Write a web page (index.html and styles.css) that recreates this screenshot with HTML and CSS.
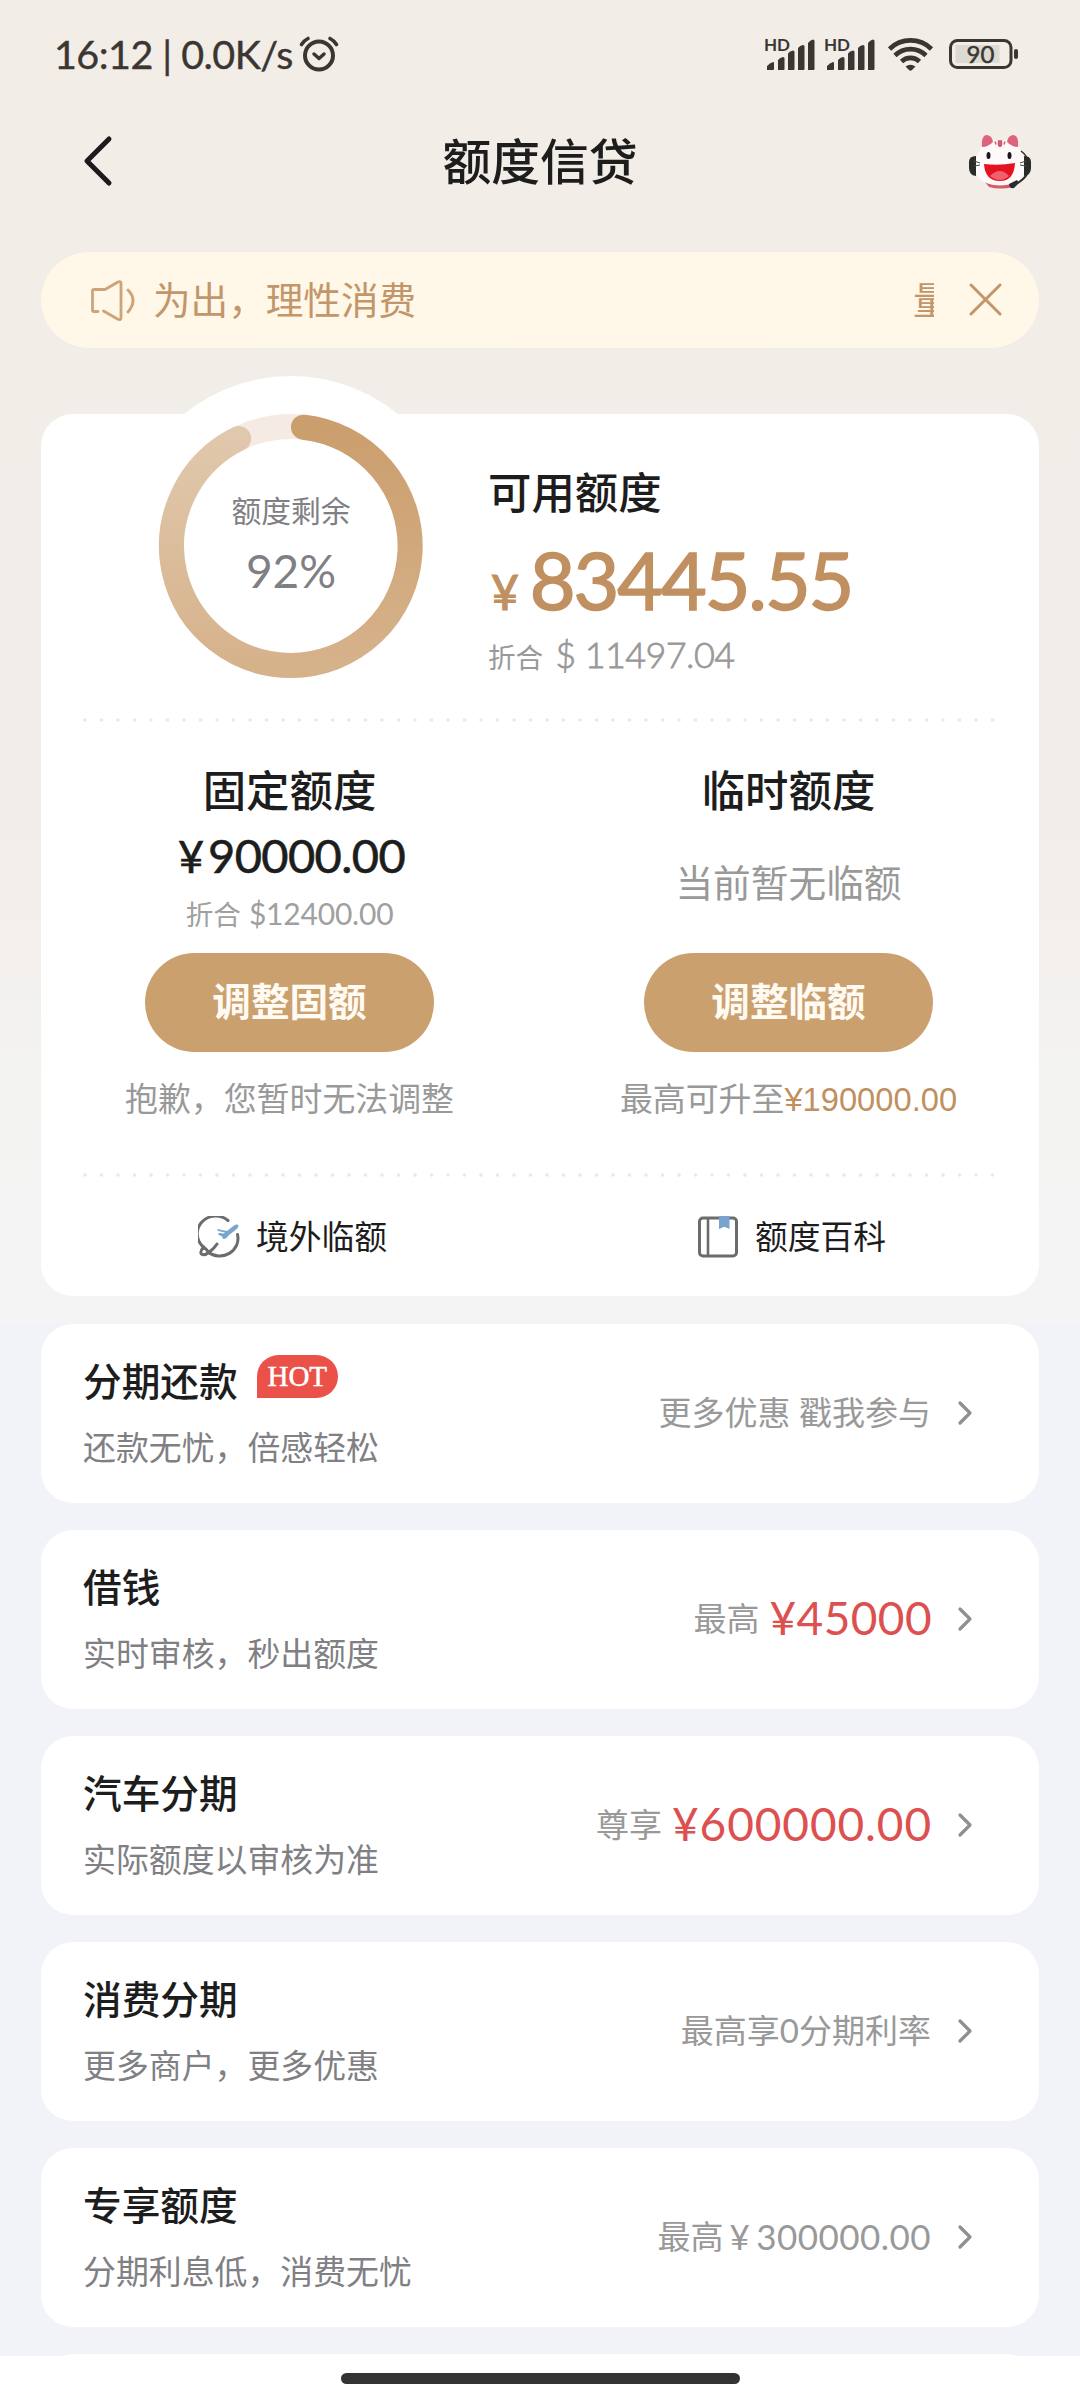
FILE: index.html
```html
<!DOCTYPE html>
<html lang="zh-CN">
<head>
<meta charset="utf-8">
<title>额度信贷</title>
<link rel="stylesheet" href="styles.css">
</head>
<body>
<div class="screen">
  <header class="status">
    <span class="clock">16:12 | 0.0K/s</span>
    <svg class="alarm" width="40" height="38" viewBox="0 0 40 38" fill="none" stroke="#3b3632" stroke-linecap="round">
      <circle cx="20" cy="20.500" r="14" stroke-width="4"/>
      <path d="M15 19l5 4.500 5-4.500" stroke-width="3.500" stroke-linejoin="round"/>
      <path d="M2.500 9.500Q5 5.500 9 3.500M37.500 9.500Q35 5.500 31 3.500" stroke-width="3.600"/>
    </svg>
    <svg class="signals" width="254" height="38" viewBox="0 0 254 38">
      <defs>
        <g id="signal" fill="#3b3632">
          <text x="0" y="15.500" class="hd">HD</text>
          <path d="M3 35v-4q3-3 6-4q1 0 1 1v6q0 1-1 1z"/>
          <path d="M14 35V25q2-2.500 5-3q1.500 0 1.500 1.500V34q0 1-1 1z"/>
          <path d="M24 35V18.500q2-2.500 5-3q1.500 0 1.500 1.500v17q0 1-1 1z"/>
          <path d="M34 35V13q2-2.500 5-3q1.500 0 1.500 1.500V34q0 1-1 1z"/>
          <path d="M44 35V8q2-3 5-3.500q1.500 0 1.500 1.500v28q0 1-1 1z"/>
        </g>
      </defs>
      <use href="#signal"/>
      <use href="#signal" x="60"/>
      <g fill="none" stroke="#3b3632" stroke-width="4.600">
        <path d="M125.500 14a30 30 0 0 1 42 0"/>
        <path d="M131 20.500a22 22 0 0 1 31 0"/>
        <path d="M137.500 26.500a13 13 0 0 1 18 0"/>
      </g>
      <path d="M141.500 31.500q5-3.500 10 0L148 35q-1.500 1.500-3 0z" fill="#3b3632"/>
      <rect x="191.500" y="10" width="44" height="18" fill="#dcdad3"/>
      <rect x="186.500" y="5.500" width="60.500" height="27" rx="7" fill="none" stroke="#3b3632" stroke-width="3"/>
      <rect x="250" y="14" width="4" height="10" rx="2" fill="#3b3632"/>
      <text x="216.500" y="27.500" class="charge">90</text>
    </svg>
  </header>

  <nav class="bar">
    <svg class="back" width="30" height="52" viewBox="0 0 30 52" fill="none" stroke="#1b1b1b" stroke-width="5" stroke-linecap="round" stroke-linejoin="round"><path d="M26 4L4 26l22 22"/></svg>
    <h1>额度信贷</h1>
    <svg class="mascot" width="64" height="58" viewBox="0 0 64 58">
      <path d="M17 50q14 7 31 0l-3 5q-12 3-24 0z" fill="#d9596c"/>
      <path d="M32 8c10 0 17 3 20 10 4 7 6 13 5 20-2 11-13 15-25 15S9 49 7 38c-1-7 1-13 5-20C15 11 22 8 32 8z" fill="#fffafa"/>
      <path d="M14 15Q13 3 19 3q5 .500 6 7-5 5-11 5zM50 15Q51 3 45 3q-5 .500-6 7 5 5 11 5z" fill="#dd647c"/>
      <path d="M30.500 9h3v4q-1.500 3-3 0zM27 9.500l1 3M37 9.500l-1 3" fill="#cf5b6c" stroke="#cf5b6c" stroke-width="1.500"/>
      <ellipse cx="20.500" cy="23.500" rx="2" ry="3.600" fill="#18181a"/>
      <ellipse cx="41.500" cy="23.500" rx="2" ry="3.600" fill="#18181a"/>
      <path d="M16 32q15 2 31-1-1 18-15 18-15 0-16-17z" fill="#e51322"/>
      <path d="M22 44q10-10 19 0-9 8-19 0z" fill="#f0616d"/>
      <path d="M8 24q-7 0-7 6v6q0 7 7 8zM56 24q7 0 7 6v6q0 7-7 8z" fill="#2c2b2b"/>
      <path d="M6 29l6 2M6 34l6-1M58 29l-6 2M58 34l-6-1" stroke="#444" stroke-width="1"/>
      <path d="M59 42q-2 4-9 9" fill="none" stroke="#2c2b2b" stroke-width="2"/>
      <path d="M41 52l8-4 2 3-5 5q-5 1-5-4z" fill="#2c2b2b"/>
      <path d="M53 19q7 5 7 12" fill="none" stroke="#2c2b2b" stroke-width="1.500"/>
    </svg>
  </nav>

  <div class="notice">
    <svg width="46" height="44" viewBox="0 0 46 44" fill="none" stroke="#cda377" stroke-width="2.800" stroke-linecap="round" stroke-linejoin="round">
      <path d="M9 33.500H5Q3.500 33.500 3.500 32V13Q3.500 11.500 5 11.500h11L29 4q3-1 3 1.500v34q0 3-3 1.800L14.500 33"/>
      <path d="M39 12q10 10 0 22"/>
    </svg>
    <p class="ticker">为出，理性消费</p>
    <p class="ticker-next">量</p>
    <svg class="close" width="34" height="34" viewBox="0 0 34 34" fill="none" stroke="#c2956a" stroke-width="3" stroke-linecap="round"><path d="M2 2l29 29M31 2L2 31"/></svg>
  </div>

  <section class="card summary">
    <div class="hero">
      <svg class="ring" width="340" height="340" viewBox="0 0 340 340">
        <defs>
          <linearGradient id="warm" x1="0" y1="50" x2="0" y2="290" gradientUnits="userSpaceOnUse"><stop offset="0" stop-color="#cb9e6d"/><stop offset="1" stop-color="#d6b28b"/></linearGradient>
          <linearGradient id="pale" x1="0" y1="50" x2="0" y2="290" gradientUnits="userSpaceOnUse"><stop offset="0" stop-color="#e1c9ae"/><stop offset="1" stop-color="#d6b28b"/></linearGradient>
        </defs>
        <circle cx="170" cy="170" r="170" fill="#fff"/>
        <g fill="none" stroke-width="25">
          <circle cx="170" cy="170" r="119.500" stroke="#f5ebe4"/>
          <path d="M117.600 62.600A119.500 119.500 0 0 0 170 289.500" stroke="url(#pale)" stroke-linecap="round"/>
          <path d="M170 289.500A119.500 119.500 0 0 0 182.500 51.200" stroke="url(#warm)"/>
        </g>
        <circle cx="182.500" cy="51.200" r="12.500" fill="#cb9e6d"/>
        <text x="170" y="145.500" class="ring-label">额度剩余</text>
        <text x="170" y="212" class="ring-value">92%</text>
      </svg>
      <div class="available">
        <h2>可用额度</h2>
        <p class="total"><span class="yen">¥</span>83445.55</p>
        <p class="approx">折合 <span class="usd">$ 11497.04</span></p>
      </div>
    </div>
    <svg class="dots" width="916" height="4"><path d="M2 2H914" stroke="#e9e9e9" stroke-width="3.600" stroke-linecap="round" stroke-dasharray="0 16.500"/></svg>
    <div class="limits">
      <div class="limit">
        <h2>固定额度</h2>
        <p class="fixed">¥<span class="fixed-sum">90000.00</span></p>
        <p class="equiv">折合 <span class="equiv-usd">$12400.00</span></p>
        <div class="button">调整固额</div>
        <p class="note">抱歉，您暂时无法调整</p>
      </div>
      <div class="limit">
        <h2>临时额度</h2>
        <p class="none">当前暂无临额</p>
        <div class="button">调整临额</div>
        <p class="note">最高可升至<span class="raise">¥190000.00</span></p>
      </div>
    </div>
    <svg class="dots" width="916" height="4"><path d="M2 2H914" stroke="#e9e9e9" stroke-width="3.600" stroke-linecap="round" stroke-dasharray="0 16.500"/></svg>
    <div class="links">
      <div class="link">
        <svg width="42" height="42" viewBox="0 0 42 42" fill="none">
          <path d="M30 4.500A18.300 17.500 0 0 0 5.500 31M10 36A18.300 17.500 0 0 0 39.500 18.500" stroke="#6c6c6e" stroke-width="3" stroke-linecap="round"/>
          <path d="M5.500 31q-4 5-2 7 3 2 8-2 5-4 7.500-8M5.500 31q3 2 5 5" stroke="#6c6c6e" stroke-width="3" stroke-linecap="round"/>
          <path d="M19 13l10 2 7-5.500q3.500-2 4.500 0 0 2-3 4.500l-6.500 5L28 22.500l-3 .500-1-2.500-4-2q0-1.500 1.500-1.500l4.500.500 1-1-7-1.500z" fill="#79a5cd"/>
        </svg>
        <span>境外临额</span>
      </div>
      <div class="link">
        <svg width="42" height="42" viewBox="0 0 42 42" fill="none">
          <rect x="2.500" y="2" width="37" height="38" rx="3.500" stroke="#6c6c6e" stroke-width="3"/>
          <path d="M11 2v38" stroke="#6c6c6e" stroke-width="2.600"/>
          <path d="M22 0h10.500v13l-5.200-2.300L22 13z" fill="#78a3cf"/>
        </svg>
        <span>额度百科</span>
      </div>
    </div>
  </section>

  <main class="list">
    <article class="card item">
      <div class="item-text"><h3>分期还款<span class="hot">HOT</span></h3><p>还款无忧，倍感轻松</p></div>
      <p class="item-side">更多优惠 戳我参与</p>
      <svg class="chevron" width="18" height="28" viewBox="0 0 18 28"><path d="M4 4l10 10L4 24"/></svg>
    </article>
    <article class="card item">
      <div class="item-text"><h3>借钱</h3><p>实时审核，秒出额度</p></div>
      <p class="item-side">最高<span class="red short">¥45000</span></p>
      <svg class="chevron" width="18" height="28" viewBox="0 0 18 28"><path d="M4 4l10 10L4 24"/></svg>
    </article>
    <article class="card item">
      <div class="item-text"><h3>汽车分期</h3><p>实际额度以审核为准</p></div>
      <p class="item-side">尊享<span class="red">¥600000.00</span></p>
      <svg class="chevron" width="18" height="28" viewBox="0 0 18 28"><path d="M4 4l10 10L4 24"/></svg>
    </article>
    <article class="card item">
      <div class="item-text"><h3>消费分期</h3><p>更多商户，更多优惠</p></div>
      <p class="item-side">最高享0分期利率</p>
      <svg class="chevron" width="18" height="28" viewBox="0 0 18 28"><path d="M4 4l10 10L4 24"/></svg>
    </article>
    <article class="card item">
      <div class="item-text"><h3>专享额度</h3><p>分期利息低，消费无忧</p></div>
      <p class="item-side">最高<span class="grey-sum"><span class="grey-yen">¥</span>300000.00</span></p>
      <svg class="chevron" width="18" height="28" viewBox="0 0 18 28"><path d="M4 4l10 10L4 24"/></svg>
    </article>
    <article class="card item"></article>
  </main>
  <footer class="home"><div class="home-bar"></div></footer>
</div>
</body>
</html>
```
FILE: styles.css
```css
* { box-sizing: border-box; margin: 0; padding: 0; }

body {
  font-family: Lato, "Noto Sans CJK SC", sans-serif;
  color: #1d1d1d;
  background: #f2f3f8;
}

svg { display: block; flex: none; }

.screen {
  display: flex;
  flex-direction: column;
  width: 1080px;
  height: 2400px;
  overflow: hidden;
  background: linear-gradient(#f2ede7 0, #f1ede8 640px, #f3eeeb 880px, #f3f3f2 1080px, #f4f4f4 1324px, #f2f3f8 1324px);
}

.status {
  display: flex;
  height: 108px;
  padding: 35px 62px 0 54px;
  color: #3b3632;
}
.clock {
  width: 245px;
  font-size: 39.500px;
  line-height: 38px;
  letter-spacing: -0.550px;
  -webkit-text-stroke: 0.400px #3b3632;
  white-space: nowrap;
}
.signals { margin-left: auto; }
.hd { font: 700 17px Lato, sans-serif; }
.charge { font: 400 24px Lato, sans-serif; fill: #3b3632; stroke: #3b3632; stroke-width: 0.500px; text-anchor: middle; }

.bar {
  display: flex;
  align-items: center;
  justify-content: space-between;
  height: 106px;
  padding: 0 48px 0 83px;
}
.bar h1 {
  padding: 0 1px 1px 0;
  font-size: 48.800px;
  line-height: 60px;
  font-weight: 500;
}

.notice {
  display: flex;
  align-items: center;
  height: 96px;
  margin: 38px 41px 66px;
  padding: 0 36px 0 48px;
  border-radius: 48px;
  background: #fff7e7;
  color: #c2966a;
  font-size: 37.600px;
  line-height: 50px;
}
.ticker { margin-left: 18px; }
.ticker-next {
  width: 21px;
  margin-left: auto;
  overflow: hidden;
}
.close { margin-left: 35px; }

.card {
  border-radius: 32px;
  background: #fff;
}

.summary { height: 882px; margin: 0 41px 28px; flex: none; }
.hero { display: flex; height: 304px; }
.ring { margin: -38px 27px 0 80px; }
.ring-label { font-size: 29.800px; fill: #808084; text-anchor: middle; }
.ring-value { font-size: 46px; fill: #808084; text-anchor: middle; }

h2 { font-size: 43.400px; line-height: 50px; font-weight: 500; }
.available { padding-top: 53px; }
.total {
  margin-top: 23px;
  font-size: 79px;
  line-height: 80px;
  letter-spacing: -2.100px;
  color: #c09060;
  -webkit-text-stroke: 1.600px #c09060;
  white-space: nowrap;
}
.yen {
  margin: 0 13px 0 3px;
  font-size: 48px;
  line-height: 0;
  -webkit-text-stroke-width: 1.200px;
}
.approx { margin-top: 18px; font-size: 27.600px; line-height: 40px; color: #999; }
.usd {
  margin-left: 5px;
  font-size: 36px;
  line-height: 0;
  letter-spacing: -0.600px;
  font-weight: 300;
  -webkit-text-stroke: 0.800px #999;
}

.dots { margin: 0 auto 0 42px; }

.limits { display: flex; height: 451px; }
.limit {
  display: flex;
  flex: 1;
  flex-direction: column;
  align-items: center;
  padding: 43px 2px 0 0;
}
.fixed {
  margin-top: 16px;
  padding-left: 4px;
  font-size: 45px;
  line-height: 50px;
  -webkit-text-stroke: 0.600px #1d1d1d;
}
.fixed-sum { margin-left: 4px; font-size: 47px; line-height: 0; letter-spacing: -0.600px; }
.equiv { margin-top: 16px; font-size: 27.600px; line-height: 36px; color: #a0a0a0; }
.equiv-usd { margin-left: 1px; font-size: 30px; line-height: 0; letter-spacing: -0.200px; }
.none { margin: 46px 0 26px; font-size: 37.700px; line-height: 44px; color: #999; }
.button {
  width: 289px;
  height: 99px;
  margin-top: 20px;
  border-radius: 50px;
  background: #cba06f;
  color: #fffaf2;
  font-size: 38.600px;
  line-height: 96px;
  font-weight: 700;
  text-align: center;
}
.none + .button { margin-top: 22px; }
.note { margin-top: 27px; font-size: 32.900px; line-height: 40px; color: #999; }
.raise { font-family: "Liberation Sans", sans-serif; font-size: 32.700px; line-height: 0; color: #c0905f; }

.links { display: flex; height: 119px; }
.link {
  display: flex;
  flex: 1;
  align-items: center;
  justify-content: center;
  gap: 16px;
  padding-left: 4px;
  font-size: 32.800px;
}
.link span { padding-bottom: 4px; }

.list { display: flex; flex: 1; flex-direction: column; gap: 27px; min-height: 0; overflow: hidden; padding: 0 41px; }
.item {
  display: flex;
  flex: none;
  align-items: center;
  height: 179px;
  padding: 0 65px 2px 42px;
}
.item-text { margin-right: auto; }
h3 { display: flex; align-items: center; height: 50px; font-size: 38.700px; line-height: 50px; font-weight: 500; }
.item-text p { margin-top: 20px; font-size: 32.900px; line-height: 44px; color: #808084; }
.hot {
  width: 81px;
  height: 43px;
  margin: -8px 0 0 19px;
  border-radius: 22px 22px 22px 0;
  background: #ea5249;
  color: #fff;
  font: 29px/42px "Liberation Serif", serif;
  -webkit-text-stroke: 0.500px #fff;
  text-align: center;
}
.item-side { display: flex; align-items: center; padding-bottom: 1px; font-size: 33px; line-height: 44px; color: #999; white-space: pre; }
.red { margin: 0 -1px 0 10px; font-size: 46px; letter-spacing: 0.900px; color: #dc5050; }
.short { letter-spacing: 0.400px; }
.grey-sum { margin-left: 6px; font-size: 35px; letter-spacing: 0.450px; }
.grey-yen { margin-right: 6px; }
.chevron { margin-left: 25px; fill: none; stroke: #8f8f8f; stroke-width: 3.200px; stroke-linecap: round; stroke-linejoin: round; }

.home {
  display: flex;
  flex: none;
  justify-content: center;
  height: 44px;
  padding-top: 17px;
  background: #fff;
}
.home-bar { width: 399px; height: 11px; border-radius: 6px; background: #333; }
```
